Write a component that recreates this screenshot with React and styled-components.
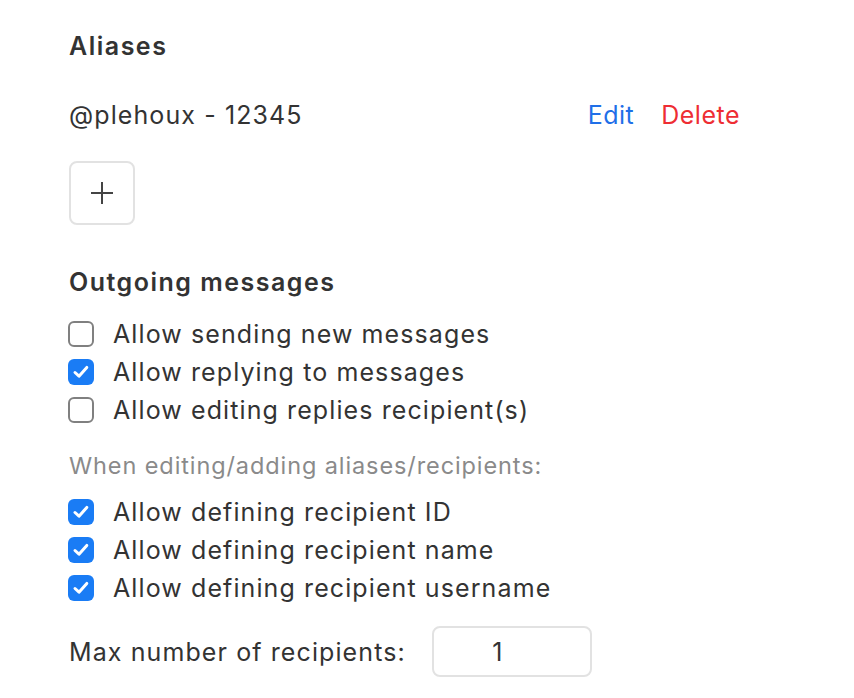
import React from "react";
import styled, { createGlobalStyle } from "styled-components";

const GlobalStyle = createGlobalStyle`
  html, body {
    margin: 0;
    padding: 0;
    background: #ffffff;
  }
  body {
    font-family: Inter, "Liberation Sans", sans-serif;
    color: #333333;
    letter-spacing: 1.1px;
  }
`;

const Page = styled.div`
  padding: 30px 0 0 69px;
  width: 671px;
`;

const Heading = styled.h2`
  margin: ${(p) => p.$top || 0}px 0 0 0;
  font-size: 25px;
  font-weight: 600;
  line-height: 32px;
  letter-spacing: 1.5px;
  color: #333;
`;

const AliasRow = styled.div`
  margin-top: 34px;
  height: 38px;
  display: flex;
  align-items: center;
  justify-content: space-between;
  font-size: 25px;
`;

const Actions = styled.div`
  display: flex;
  gap: 27px;
`;

const LinkButton = styled.button`
  border: none;
  background: none;
  padding: 0;
  font: inherit;
  font-size: 25px;
  letter-spacing: 0.5px;
  cursor: pointer;
  color: ${(p) => (p.$danger ? "#ee2d33" : "#1f6fe8")};
`;

const AddButton = styled.button`
  margin-top: 27px;
  width: 66px;
  height: 64px;
  border: 2px solid #e2e2e2;
  border-radius: 8px;
  background: #fff;
  display: flex;
  align-items: center;
  justify-content: center;
  padding: 0;
`;

const List = styled.div`
  margin-top: ${(p) => p.$top}px;
  display: flex;
  flex-direction: column;
`;

const Option = styled.label`
  height: 38px;
  display: flex;
  align-items: center;
  gap: 19px;
  font-size: 25px;
  color: #333;
`;

const Box = styled.span`
  width: 26px;
  height: 26px;
  box-sizing: border-box;
  border-radius: 6px;
  flex-shrink: 0;
  display: flex;
  align-items: center;
  justify-content: center;
  margin-left: -1px;
  background: ${(p) => (p.$on ? "#1a7cf5" : "#fff")};
  border: ${(p) => (p.$on ? "none" : "2px solid #808080")};
`;

const Hint = styled.div`
  margin-top: 22px;
  line-height: 30px;
  font-size: 23.5px;
  letter-spacing: 0.9px;
  color: #8a8a8a;
`;

const MaxRow = styled.div`
  margin-top: 19px;
  display: flex;
  align-items: center;
  gap: 26px;
  font-size: 25px;
`;

const NumberInput = styled.div`
  width: 160px;
  height: 51px;
  box-sizing: border-box;
  border: 2px solid #e2e2e2;
  border-radius: 8px;
  display: flex;
  align-items: center;
  justify-content: center;
  padding-right: 28px;
  font-size: 25px;
`;

const Check = ({ on, label }) => (
  <Option>
    <Box $on={on}>
      {on && (
        <svg width="20" height="20" viewBox="0 0 20 20">
          <path
            d="M4 10.5 L8 14.2 L15.8 5.4"
            fill="none"
            stroke="#fff"
            strokeWidth="3"
            strokeLinecap="round"
            strokeLinejoin="round"
          />
        </svg>
      )}
    </Box>
    {label}
  </Option>
);

const App = () => {
  return (
    <Page>
      <GlobalStyle />
      <Heading>Aliases</Heading>
      <AliasRow>
        <span>@plehoux - 12345</span>
        <Actions>
          <LinkButton>Edit</LinkButton>
          <LinkButton $danger>Delete</LinkButton>
        </Actions>
      </AliasRow>
      <AddButton>
        <svg width="24" height="24" viewBox="0 0 24 24">
          <path d="M12 1 V23 M1 12 H23" stroke="#444" strokeWidth="2" />
        </svg>
      </AddButton>

      <Heading $top={41}>Outgoing messages</Heading>
      <List $top={17}>
        <Check on={false} label="Allow sending new messages" />
        <Check on label="Allow replying to messages" />
        <Check on={false} label="Allow editing replies recipient(s)" />
      </List>

      <Hint>When editing/adding aliases/recipients:</Hint>
      <List $top={12}>
        <Check on label="Allow defining recipient ID" />
        <Check on label="Allow defining recipient name" />
        <Check on label="Allow defining recipient username" />
      </List>

      <MaxRow>
        <span>Max number of recipients:</span>
        <NumberInput>1</NumberInput>
      </MaxRow>
    </Page>
  );
};

export default App;
